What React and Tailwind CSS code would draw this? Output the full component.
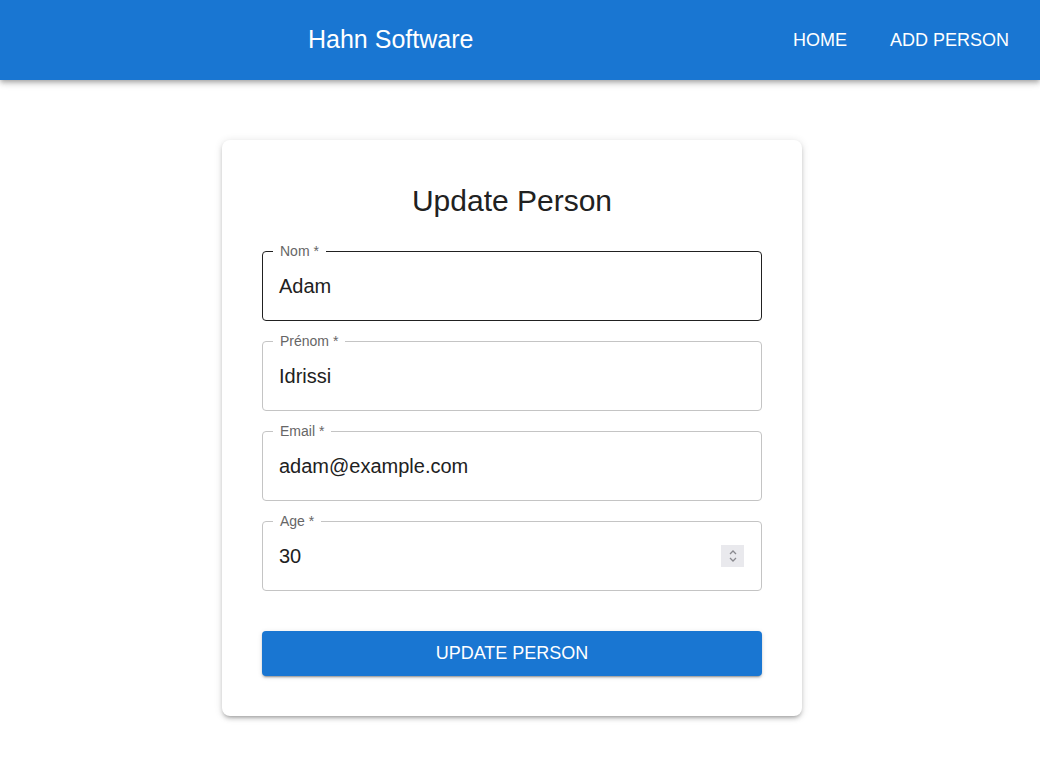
import React from 'react';

const fields = [
  { label: 'Nom *', value: 'Adam', active: true },
  { label: 'Prénom *', value: 'Idrissi' },
  { label: 'Email *', value: 'adam@example.com' },
  { label: 'Age *', value: '30', spinner: true },
];

const Field = ({ label, value, active, spinner }) => (
  <div
    className={`relative flex h-[70px] items-center rounded-[4px] border pl-4 pr-[17px] ${
      active ? 'border-[#212121]' : 'border-[#c4c4c4]'
    }`}
  >
    <span className="absolute left-[10px] top-[-10px] bg-white px-[7px] text-[14px] leading-[18px] text-[#666666]">
      {label}
    </span>
    <span className="flex-1 text-[20px] text-[#212121]">{value}</span>
    {spinner && (
      <div className="flex h-[22px] w-[23px] flex-col items-center justify-center bg-[#e9e9ed]">
        <svg width="10" height="16" viewBox="0 0 10 16" fill="none" stroke="#8a8a8f" strokeWidth="1.3">
          <path d="M2 6 L5 3 L8 6" />
          <path d="M2 10 L5 13 L8 10" />
        </svg>
      </div>
    )}
  </div>
);

export default function App() {
  return (
    <div className="min-h-[777px] bg-white font-['Liberation_Sans',Arial,sans-serif]">
      <header className="flex h-20 items-center bg-[#1976d2] pl-[308px] pr-[31px] text-white shadow-[0_2px_4px_-1px_rgba(0,0,0,0.2),0_4px_5px_0_rgba(0,0,0,0.14),0_1px_10px_0_rgba(0,0,0,0.12)]">
        <h1 className="flex-1 text-[25px]">Hahn Software</h1>
        <nav className="flex items-center gap-[43px] text-[18px] uppercase">
          <a>Home</a>
          <a>Add Person</a>
        </nav>
      </header>

      <main className="flex justify-center pr-4 pt-[60px]">
        <div className="w-[580px] rounded-[8px] bg-white p-10 shadow-[0_3px_3px_-2px_rgba(0,0,0,0.2),0_3px_4px_0_rgba(0,0,0,0.14),0_1px_8px_0_rgba(0,0,0,0.12)]">
          <h2 className="mb-[29px] text-center text-[30px] leading-[42px] text-[#212121]">Update Person</h2>
          <div className="flex flex-col gap-5">
            {fields.map((f) => (
              <Field key={f.label} {...f} />
            ))}
          </div>
          <button className="mt-10 h-[45px] w-full rounded-[4px] bg-[#1976d2] text-[18px] uppercase text-white shadow-[0_3px_1px_-2px_rgba(0,0,0,0.2),0_2px_2px_0_rgba(0,0,0,0.14),0_1px_5px_0_rgba(0,0,0,0.12)]">
            Update Person
          </button>
        </div>
      </main>
    </div>
  );
}
